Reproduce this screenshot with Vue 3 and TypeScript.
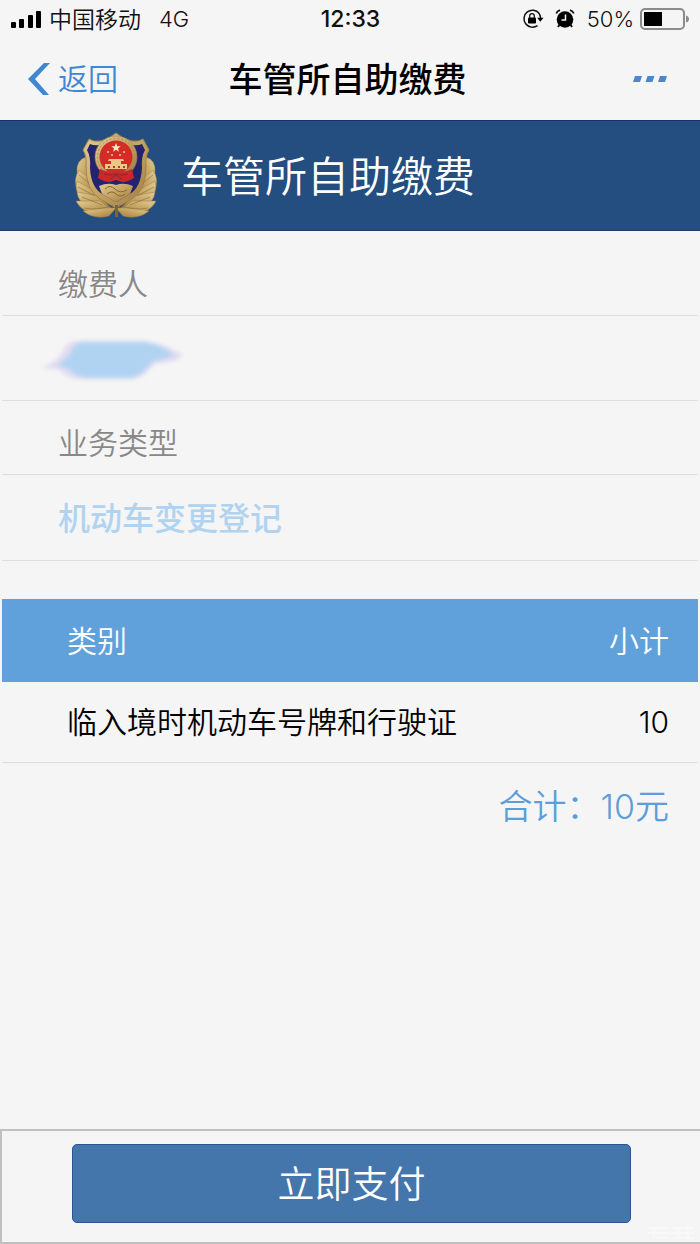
<script setup lang="ts">
interface FeeItem {
  name: string
  amount: number
}

const title = '车管所自助缴费'
const items: FeeItem[] = [{ name: '临入境时机动车号牌和行驶证', amount: 10 }]
const total = items.reduce((sum, item) => sum + item.amount, 0)
</script>

<template>
  <div class="page">
    <div class="status">
      <div class="carrier">
        <svg class="signal" viewBox="0 0 32 20" aria-hidden="true">
          <rect x="0" y="13" width="5" height="6" rx="1" />
          <rect x="8" y="10" width="5" height="9" rx="1" />
          <rect x="17" y="6" width="5" height="13" rx="1" />
          <rect x="25" y="2" width="5" height="17" rx="1" />
        </svg>
        <span class="operator">中国移动</span>
        <span class="network">4G</span>
      </div>
      <time class="clock">12:33</time>
      <div class="indicators">
        <svg class="lock" viewBox="0 0 22 22" aria-hidden="true">
          <path d="M17.2 5.500A8.500 8.500 0 1 0 15.500 17.600M16 4.300a8.500 8.500 0 0 1 2.600 6" fill="none" stroke="#111" stroke-width="1.500" />
          <path d="M15.200 9.800h6.300l-3.200 4z" />
          <rect x="6" y="9.500" width="8" height="6" rx="1" />
          <path d="M7.700 10V8a2.300 2.300 0 0 1 4.600 0v2" fill="none" stroke="#111" stroke-width="1.300" />
        </svg>
        <svg class="alarm" viewBox="0 0 20 20" aria-hidden="true">
          <circle cx="10" cy="10.500" r="8.300" />
          <path d="M1.200 4.500Q2.200 2 5 1.200M18.800 4.500Q17.800 2 15 1.200" fill="none" stroke="#111" stroke-width="1.800" />
          <path d="M4.500 15.500L3 18M15.500 15.500L17 18" stroke="#111" stroke-width="2" />
          <path d="M10.500 5.500v5.500H6.500" fill="none" stroke="#f5f5f5" stroke-width="1.500" />
        </svg>
        <span>50%</span>
        <svg class="battery" viewBox="0 0 50 22" aria-hidden="true">
          <rect x="1" y="1" width="43" height="20" rx="4" fill="none" stroke="#8b8b8b" stroke-width="2" />
          <rect x="4" y="4" width="18" height="14" fill="#000" />
          <path d="M46 7.500q3 1 3 3.500t-3 3.500z" fill="#8b8b8b" />
        </svg>
      </div>
    </div>

    <nav class="nav">
      <a class="back" href="#">
        <svg viewBox="0 0 22 32" aria-hidden="true">
          <path d="M16 0h6L7 16l14 16h-6L0 16z" />
        </svg>
        <span>返回</span>
      </a>
      <h1>{{ title }}</h1>
      <button class="more" type="button" aria-label="更多">
        <svg viewBox="0 0 34 6" aria-hidden="true">
          <path d="M2 0h7L7 6H0zM14.500 0h7l-2 6h-7zM27 0h7l-2 6h-7z" />
        </svg>
      </button>
    </nav>

    <header class="banner">
      <svg class="emblem" viewBox="0 0 84 88" aria-hidden="true">
        <defs>
          <linearGradient id="gold" x1="0" y1="0" x2="1" y2="1">
            <stop offset="0" stop-color="#dfcd98" />
            <stop offset="0.5" stop-color="#c6a461" />
            <stop offset="1" stop-color="#9c7a42" />
          </linearGradient>
        </defs>
        <g fill="url(#gold)" stroke="#9a7b46" stroke-width="0.500">
          <g v-for="side in [1, -1]" :key="side" :transform="side === 1 ? undefined : 'translate(84 0) scale(-1 1)'">
            <path d="M12 25Q2 28 3 40L7 50L18 58V36Z" />
            <path d="M5 38Q-1 47 3 58L20 66L18 48Z" />
            <path d="M3 49Q0 60 8 67L30 73L22 60Z" />
            <path d="M3 60Q4 71 15 74L37 76L25 64Z" />
            <path d="M2 69Q8 81 23 81L40 79L26 69Z" />
            <path d="M9 79Q20 88 35 84L42 76Q28 75 9 79Z" />
          </g>
        </g>
        <path d="M42 1Q34 8 26 9Q19 10 15 7L9 18Q13 24 12 35Q12 58 26 67L42 76L58 67Q72 58 72 35Q71 24 75 18L69 7Q65 10 58 9Q50 8 42 1Z" fill="url(#gold)" stroke="#a3854d" />
        <path d="M42 6Q35 12 27 13Q20 14 16 12L13 18Q17 25 16 36Q17 55 28 62L42 70L56 62Q67 55 68 36Q67 25 71 18L68 12Q64 14 57 13Q49 12 42 6Z" fill="#24246e" />
        <path d="M25 54Q34 50 42 53Q50 50 59 54L56 62L42 70L28 62Z" fill="url(#gold)" />
        <path d="M31 57q5-5 10 0t12 1M33 62q5-4 9 0t9 0" fill="none" stroke="#856738" />
        <circle cx="42" cy="25" r="21" fill="url(#gold)" stroke="#a3854d" stroke-width="0.600" />
        <circle cx="42" cy="25" r="18.500" fill="none" stroke="#a88a4e" stroke-width="1" stroke-dasharray="2 2" />
        <circle cx="42" cy="25" r="16.500" fill="#d42b27" />
        <path d="M42 11l1.300 3.200h3.500l-2.800 2.200 1 3.400-3-2-3 2 1-3.400-2.800-2.200h3.500z" fill="#f7e7c2" />
        <g fill="#edc788">
          <circle cx="34" cy="20" r="1" /><circle cx="38" cy="23" r="1" />
          <circle cx="46" cy="23" r="1" /><circle cx="50" cy="20" r="1" />
          <path d="M35 27h14l1 2H34zM37 29h10v3H37zM31 32h22v5H31z" />
        </g>
        <path d="M34 34h2v2h-2zM39 34h2v2h-2zM44 34h2v2h-2zM49 34h2v2h-2z" fill="#aa4529" />
        <path d="M26 37q8 4 16 2q8 2 16-2l2 9q-6 4-12 4l-6-2-6 2q-6 0-12-4z" fill="#c9292d" />
        <path d="M30 42q6 2 12 0q6 2 12 0M36 47l6-4 6 4" fill="none" stroke="#97202a" />
        <path d="M41 73h3v12h-3z" fill="#806335" />
        <g fill="none" stroke="#8c6c37" stroke-width="0.600">
          <path d="M5 43l10 8M4 55l17 9M8 65l20 8M10 76q15 3 29-3M79 43l-10 8M80 55l-17 9M76 65l-20 8M74 76q-15 3-29-3" />
        </g>
      </svg>
      <h2>{{ title }}</h2>
    </header>

    <main class="content">
      <dl class="details">
        <dt class="first">缴费人</dt>
        <dd class="payer">
          <svg class="smudge" viewBox="0 0 150 50" role="img" aria-label="已隐藏">
            <defs>
              <filter id="soft" x="-20%" y="-20%" width="140%" height="140%">
                <feGaussianBlur stdDeviation="2" />
              </filter>
            </defs>
            <g filter="url(#soft)">
              <path d="M2 32Q18 27 24 17Q28 7 36 5H108Q122 8 132 12L145 19L137 25L116 28Q106 41 96 43H36Q26 39 20 33Z" fill="#e0dcf1" />
              <path d="M19 30L31 20Q36 8 43 6H108Q122 9 130 15L136 20L114 26Q104 40 94 42H46Q36 38 29 32Z" fill="#b1d3f2" />
            </g>
          </svg>
        </dd>
        <dt>业务类型</dt>
        <dd class="service">机动车变更登记</dd>
      </dl>

      <table class="fees">
        <thead>
          <tr><th scope="col">类别</th><th scope="col">小计</th></tr>
        </thead>
        <tbody>
          <tr v-for="item in items" :key="item.name">
            <td>{{ item.name }}</td><td>{{ item.amount }}</td>
          </tr>
        </tbody>
      </table>
      <p class="total">合计：{{ total }}元</p>
    </main>

    <footer class="footer">
      <button class="pay" type="button">立即支付</button>
      <svg class="mark" viewBox="0 0 48 14" aria-hidden="true">
        <path d="M1 2h19M0 7h21M9 12h12M24 2h22M23 7h23M26 12h20M6 1v11M30 2v10M40 1v12" />
      </svg>
    </footer>
  </div>
</template>

<style>
body {
  margin: 0;
  background: #f5f5f5;
}
</style>

<style scoped>
.page {
  box-sizing: border-box;
  min-height: 100vh;
  display: flex;
  flex-direction: column;
  background: #f5f5f5;
  color: #111;
  font-family: Inter, "Noto Sans CJK SC", sans-serif;
  font-weight: 350;
}
svg {
  display: block;
  flex: none;
}
h1, h2, p, dl, dd {
  margin: 0;
}
.status {
  display: grid;
  grid-template-columns: 1fr auto 1fr;
  align-items: center;
  height: 38px;
  padding: 0 10px 0 11px;
  font-size: 22px;
}
.carrier, .indicators {
  display: flex;
  align-items: center;
}
.signal {
  width: 32px;
  height: 20px;
  margin-right: 6px;
}
.operator {
  padding-bottom: 2px;
  font-size: 23px;
}
.network {
  margin-left: 18px;
}
.clock {
  font-size: 23px;
  font-weight: 500;
}
.indicators {
  justify-content: flex-end;
}
.lock {
  width: 22px;
  height: 22px;
}
.alarm {
  width: 20px;
  height: 20px;
  margin: 0 12px 0 11px;
}
.battery {
  width: 50px;
  height: 22px;
  margin-left: 6px;
}
.nav {
  display: grid;
  grid-template-columns: 1fr auto 1fr;
  align-items: center;
  height: 82px;
  padding: 0 33px 0 28px;
}
.back {
  display: flex;
  align-items: center;
  gap: 8px;
  color: #4087d3;
  font-size: 30px;
  text-decoration: none;
}
.back span, .nav h1, .banner h2 {
  padding-bottom: 4px;
}
.back svg {
  width: 22px;
  height: 32px;
  fill: currentColor;
}
.nav h1 {
  font-size: 34px;
  font-weight: 500;
  color: #000;
}
.more {
  justify-self: end;
  padding: 0;
  border: 0;
  background: none;
}
.more svg {
  width: 34px;
  height: 6px;
  fill: #4e87c9;
}
.banner {
  box-sizing: border-box;
  display: flex;
  align-items: center;
  gap: 23px;
  height: 111px;
  padding-left: 74px;
  border-top: 1px solid #1c326d;
  border-bottom: 1px solid #213e72;
  background: #244d80;
  color: #fff;
}
.emblem {
  width: 84px;
  height: 88px;
}
.banner h2 {
  font-size: 42px;
  font-weight: 350;
}
.content {
  flex: 1;
  padding: 0 2px;
}
.details dt, .details dd {
  box-sizing: border-box;
  display: flex;
  align-items: center;
  height: 85px;
  padding-left: 56px;
  border-bottom: 1px solid #dedede;
  font-size: 30px;
}
.details dt {
  height: 74px;
  padding-top: 6px;
  color: #888;
}
.details dt.first {
  height: 85px;
  padding-top: 18px;
}
.details .payer {
  padding-top: 6px;
}
.details .service {
  height: 86px;
  padding-bottom: 4px;
  color: #b0d3f0;
  font-size: 32px;
  font-weight: 500;
}
.smudge {
  width: 150px;
  height: 50px;
  margin-left: -20px;
}
.fees {
  width: 100%;
  margin-top: 38px;
  border-collapse: collapse;
  font-size: 30px;
}
.fees th, .fees td {
  box-sizing: border-box;
  height: 80px;
  padding: 0 29px 4px 65px;
  border-bottom: 1px solid #dedede;
  text-align: left;
  color: #000;
}
.fees th {
  height: 83px;
  border: 0;
  background: #60a1dc;
  color: #fff;
  font-weight: 350;
}
.fees th:last-child, .fees td:last-child {
  padding-left: 0;
  text-align: right;
}
.fees td:last-child {
  padding-bottom: 0;
}
.total {
  padding: 19px 29px 0 0;
  color: #5a9eda;
  font-size: 34px;
  line-height: 50px;
  text-align: right;
}
.footer {
  position: relative;
  box-sizing: border-box;
  height: 115px;
  padding: 13px 69px 0 70px;
  border: 2px solid #c0c0c0;
  border-right: 0;
}
.pay {
  display: block;
  width: 100%;
  height: 79px;
  padding: 0 0 4px;
  border: 1px solid #2c568d;
  border-radius: 5px;
  background: #4475ab;
  color: #fff;
  font-family: inherit;
  font-size: 37px;
  font-weight: 350;
}
.mark {
  position: absolute;
  right: 4px;
  bottom: 2px;
  width: 48px;
  height: 14px;
  fill: none;
  stroke: #fff;
  stroke-width: 2;
  opacity: 0.4;
}
</style>
